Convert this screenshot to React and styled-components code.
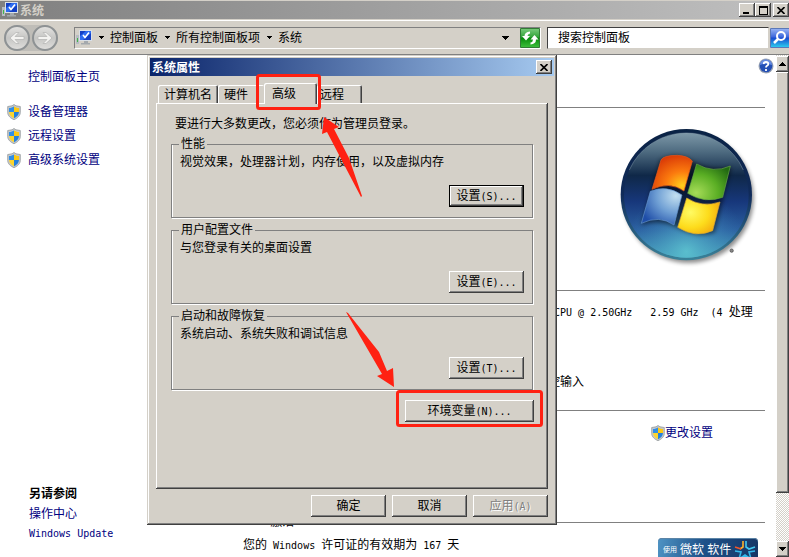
import React from 'react';
import styled, { createGlobalStyle, css } from 'styled-components';

const face = '#d4d0c8';
const navy = '#000080';
const red = '#ff2112';

const GlobalStyle = createGlobalStyle`
  * {
    box-sizing: border-box;
  }

  body {
    margin: 0;
    overflow: hidden;
    background: #fff;
    color: #000;
    font: 12px/16px 'Liberation Sans', 'Noto Sans CJK SC', sans-serif;
  }

  button,
  input {
    padding: 0;
    border: 0;
    color: inherit;
    font: inherit;
  }

  p,
  h1,
  h2,
  ul {
    margin: 0;
    padding: 0;
    font: inherit;
    list-style: none;
  }

  svg {
    display: block;
    flex: none;
  }
`;

const raised = css`
  background: ${face};
  box-shadow: inset -1px -1px #404040, inset 1px 1px #fff,
    inset -2px -2px #808080;
`;

const Page = styled.div`
  position: relative;
  display: flex;
  flex-direction: column;
  height: 100vh;
  overflow: hidden;
`;

// half-width characters take exactly half of a 12px ideograph
const Half = styled.span`
  font-family: 'DejaVu Sans Mono', monospace;
  font-size: 10px;
  white-space: pre;
`;

const TitleBar = styled.header`
  display: flex;
  flex: none;
  align-items: center;
  height: 20px;
  padding-left: 2px;
  border-top: 1px solid ${face};
  border-bottom: 1px solid ${face};
  background: linear-gradient(90deg, #808080, #c0c0c0);
`;

const Title = styled.h1`
  flex: 1;
  padding: 1px 0 0 2px;
  color: ${(p) => p.$color};
  font-weight: bold;
`;

const WindowButton = styled.button`
  ${raised}
  display: grid;
  place-items: center;
  width: 16px;
  height: 14px;
  margin-left: ${(p) => (p.$apart ? 2 : 0)}px;
`;

const NavBar = styled.nav`
  display: flex;
  flex: none;
  align-items: center;
  height: 35px;
  padding-left: 4px;
  border-top: 1px solid #fff;
  border-bottom: 1px solid #808080;
  background: ${face};
`;

const History = styled.div`
  display: flex;
  gap: 2px;
  margin-right: 16px;
  border-radius: 13px;
  background: #bfbdb8;
`;

const HistoryButton = styled.button`
  display: grid;
  place-items: center;
  width: 26px;
  height: 26px;
  border: 2px solid #8e9294;
  border-radius: 50%;
  background: linear-gradient(#e2e1df, #c6c6c4 50%, #dedddb);
`;

const AddressBar = styled.div`
  display: flex;
  flex: 1;
  align-items: center;
  height: 22px;
  padding-left: 1px;
  border: 1px solid #808080;
  border-right-color: #fff;
  border-bottom-color: #fff;
`;

const Crumb = styled.button`
  background: none;
  white-space: nowrap;
`;

const ArrowButton = styled.button`
  display: grid;
  place-items: center;
  width: 18px;
  height: 18px;
  margin-left: ${(p) => (p.$last ? 'auto' : 0)};
  background: none;
`;

const RefreshButton = styled.button`
  width: 20px;
  height: 20px;
  margin-left: 6px;
`;

const SearchBox = styled.input`
  width: 222px;
  height: 22px;
  margin: 0 1px 0 6px;
  padding-left: 10px;
  border: 1px solid #404040;
  border-right-color: ${face};
  border-bottom-color: ${face};
  border-radius: 0;
  background: #fff;

  &::placeholder {
    color: #000;
    opacity: 1;
  }
`;

const SearchButton = styled.button`
  width: 19px;
  height: 20px;
`;

const Body = styled.div`
  display: flex;
  flex: 1;
  min-height: 0;
`;

const Sidebar = styled.aside`
  display: flex;
  flex-direction: column;
  flex: none;
  width: 200px;
  padding: 10px 0 13px 7px;
`;

const Link = styled.a`
  display: flex;
  align-items: center;
  gap: ${(p) => p.$gap || 0}px;
  color: ${navy};
  text-decoration: none;
`;

const TaskList = styled.ul`
  margin-top: 11px;

  ${Link} {
    height: 24px;
  }
`;

const HomeLink = styled(Link)`
  height: 24px;
  padding-left: 21px;
`;

const SeeAlso = styled.section`
  margin-top: auto;
  padding-left: 22px;
  line-height: 20px;
`;

const SeeAlsoTitle = styled.h2`
  font-weight: bold;
`;

const Main = styled.main`
  display: flex;
  flex: 1;
  flex-direction: column;
  min-width: 0;
  padding-left: 22px;
  overflow: hidden;
`;

const HelpRow = styled.div`
  display: flex;
  flex: none;
  justify-content: flex-end;
  height: 44px;
  padding: 3px 2px 0 0;
`;

const HelpButton = styled.button`
  width: 16px;
  height: 16px;
  background: none;
`;

const Section = styled.section`
  flex: none;
  height: ${(p) => p.$height}px;
  margin-right: 11px;
`;

const SectionTitle = styled.h2`
  display: flex;
  align-items: center;
  height: 16px;

  &::after {
    content: '';
    flex: 1;
    height: 1px;
    background: #808080;
  }
`;

const LogoRow = styled.div`
  display: flex;
  justify-content: flex-end;
  padding: 12px 5px 0 0;
`;

const Specs = styled.div`
  display: grid;
  gap: 53px;
  width: 217px;
  margin: 6px 0 0 auto;
  white-space: pre;
`;

const ChangeRow = styled.div`
  display: flex;
  justify-content: flex-end;
  padding: 7px 52px 0 0;
`;

const License = styled.div`
  display: flex;
  align-items: flex-start;
  justify-content: space-between;
  padding: 7px 7px 0 21px;
`;

const Genuine = styled.a`
  display: flex;
  align-items: center;
  gap: 3px;
  width: 100px;
  height: 28px;
  padding: 0 4px 4px 5px;
  margin-top: 1px;
  border-radius: 4px;
  background: linear-gradient(100deg, #4f94c4, #1e5189 45%, #173564);
  box-shadow: inset 0 1px #5b84a6;
  color: #fff;
  white-space: nowrap;
  text-decoration: none;

  small {
    font-size: 7px;
  }
`;

const ScrollBar = styled.div`
  display: flex;
  flex: none;
  flex-direction: column;
  width: 13px;
  padding-top: 1px;
  background: repeating-conic-gradient(#fff 0 25%, ${face} 0 50%) 0 0 / 2px 2px;
`;

const ScrollButton = styled.button`
  ${raised}
  display: grid;
  flex: none;
  place-items: center;
  height: 16px;
`;

const ScrollThumb = styled.div`
  ${raised}
  flex: 1;
  margin-bottom: 48px;
`;

const Dialog = styled.section`
  position: absolute;
  top: 55px;
  left: 147px;
  width: 410px;
  padding: 3px;
  background: ${face};
  box-shadow: inset -1px -1px #404040, inset 1px 1px ${face},
    inset -2px -2px #808080, inset 2px 2px #fff;
`;

const DialogBar = styled.header`
  display: flex;
  align-items: center;
  height: 18px;
  padding-right: 2px;
  background: linear-gradient(90deg, #0a246a, #a6caf0);
`;

const DialogBody = styled.div`
  padding: 7px 6px 5px;
`;

const Tabs = styled.div`
  display: flex;
  align-items: flex-end;
  height: 20px;
  padding-left: 2px;
`;

const Tab = styled.button`
  position: relative;
  width: ${(p) => p.$width}px;
  height: 18px;
  padding: 2px 0 0 ${(p) => p.$indent}px;
  border-radius: 2px 2px 0 0;
  background: ${face};
  box-shadow: inset 1px 1px #fff, inset -1px 0 #404040, inset -2px 0 #808080;
  text-align: left;

  ${(p) =>
    p.$flat &&
    css`
      box-shadow: inset 1px 1px #fff;
    `}

  &[aria-selected='true'] {
    z-index: 1;
    height: 21px;
    margin-bottom: -1px;
    padding-bottom: 2px;
  }
`;

const Panel = styled.div`
  ${raised}
  height: 386px;
  padding: 13px 14px 0 15px;
`;

const Intro = styled.p`
  padding-left: 4px;
`;

const Group = styled.fieldset`
  display: flex;
  flex-direction: column;
  height: 82px;
  min-width: 0;
  margin: 0 0 ${(p) => (p.$last ? 10 : 4)}px;
  padding: 2px 8px 10px;
  border: 1px solid #808080;
  box-shadow: 1px 1px #fff, inset 1px 0 #fff;

  legend {
    margin-left: -1px;
    padding: 0 2px;
  }
`;

const Groups = styled.div`
  padding: 4px 1px 0 0;
`;

const Button = styled.button`
  ${raised}
  flex: none;
  width: ${(p) => p.$width || 75}px;
  height: 22px;
  white-space: nowrap;

  &:disabled {
    color: #808080;
    text-shadow: 1px 1px #fff;
  }

  ${(p) =>
    p.$primary &&
    css`
      border: 1px solid #000;
    `}
`;

const ButtonRow = styled.div`
  display: flex;
  justify-content: flex-end;
  gap: 6px;
  margin-top: ${(p) => p.$top || 'auto'};
`;

const Marks = styled.svg`
  position: absolute;
  z-index: 2;
  top: 0;
  left: 0;
  pointer-events: none;
`;

const Caret = ({ up }) => (
  <svg width='7' height='4' viewBox='0 0 7 4' shapeRendering='crispEdges'>
    <path d={up ? 'M0 4 3.5 0 7 4z' : 'M0 0h7L3.5 4z'} />
  </svg>
);

const CrumbCaret = () => (
  <svg width='5' height='3' viewBox='0 0 5 3' shapeRendering='crispEdges'>
    <path d='M0 0h5v1H0zM1 1h3v1H1zM2 2h1v1H2z' />
  </svg>
);

const Cross = () => (
  <svg width='8' height='7' viewBox='0 0 8 7'>
    <path d='M.5 0 7.5 7M7.5 0 .5 7' stroke='#000' strokeWidth='1.6' />
  </svg>
);

const ComputerIcon = () => (
  <svg width='16' height='16' viewBox='0 0 16 16' aria-hidden='true'>
    <path d='M0 5h3v9H0z' fill='#b6bcc2' />
    <path d='M1 8h1v4H1z' fill='#42b648' />
    <path d='M3 0h13v11H3z' fill='#d9e0e8' />
    <path d='M4 1h11v9H4z' fill='#123fc4' />
    <path d='M4 6 10 1h5v2L7 10H4z' fill='#2d6cf0' />
    <path d='m7 5 2 2.500L13 2.500' fill='none' stroke='#fff' strokeWidth='1.6' />
    <path d='M8 11h4v2h2v1.5H5V13h3z' fill='#a4a9ad' />
  </svg>
);

const Shield = () => (
  <svg width='14' height='16' viewBox='0 0 14 16' aria-hidden='true'>
    <path
      d='M7 .5 9 1.8l4.3.7v6c0 3.3-3 5.8-6.3 7.2C3.7 14.3.7 11.8.7 8.5v-6L5 1.8z'
      fill='#c4c8cb'
      stroke='#969a9d'
      strokeWidth='.8'
    />
    <path d='M7 2.500v5.500H2V4C4 4 5.800 3.400 7 2.500z' fill='#2f8ee6' />
    <path d='M7 2.500V8h5V4C10 4 8.200 3.400 7 2.500z' fill='#fdc912' />
    <path d='M7 8v6.300C4.700 13.300 2.200 11.200 2 8z' fill='#fdd52d' />
    <path d='M7 8v6.300c2.300-1 4.800-3.100 5-6.300z' fill='#2480dc' />
  </svg>
);

const NavArrow = ({ back }) => (
  <svg width='16' height='14' viewBox='0 0 16 14'>
    <path
      d={
        back
          ? 'M1 7 7 1.500h3L6 5.500h9v3H6l4 4H7z'
          : 'M15 7 9 1.500H6l4 4H1v3h9l-4 4h3z'
      }
      fill='#f4f3f1'
      stroke='#b8b8b6'
      strokeWidth='.8'
    />
  </svg>
);

const RefreshIcon = () => (
  <svg width='20' height='20' viewBox='0 0 20 20'>
    <defs>
      <linearGradient id='green' x2='0' y2='1'>
        <stop stopColor='#7acb7c' />
        <stop offset='.45' stopColor='#33a43a' />
        <stop offset='.5' stopColor='#078b0b' />
        <stop offset='1' stopColor='#3ec03e' />
      </linearGradient>
    </defs>
    <path d='M.5.5h19v19H.5z' fill='url(#green)' stroke='#317c35' />
    <path
      d='M10 3.500v2Q7.500 6 7.500 8H10l-4 4.500L2 8h2.500Q4.500 4 10 3.500zM10.500 16.500v-2q2.500-.5 2.500-3h-2.500l4-4.500 4 4.500H16q0 4.500-5.500 5z'
      fill='#fff'
    />
  </svg>
);

const SearchIcon = () => (
  <svg width='19' height='20' viewBox='0 0 19 20'>
    <defs>
      <linearGradient id='blue' x2='0' y2='1'>
        <stop stopColor='#9ab5f4' />
        <stop offset='.45' stopColor='#3d67dc' />
        <stop offset='.5' stopColor='#174ad0' />
        <stop offset='1' stopColor='#2ed0f0' />
      </linearGradient>
    </defs>
    <path d='M.5.5h19v19H.5z' fill='url(#blue)' stroke='#5b78b8' />
    <circle cx='11' cy='8' r='4' fill='none' stroke='#fff' strokeWidth='2' />
    <path d='m8 11-4 4' stroke='#fff' strokeWidth='2.500' />
  </svg>
);

const HelpIcon = () => (
  <svg width='16' height='16' viewBox='0 0 16 16'>
    <circle cx='8' cy='8' r='7.500' fill='#9ba4b4' />
    <circle cx='8' cy='8' r='6.300' fill='#234fb4' />
    <path d='M2 7a6 5.500 0 0 1 12 0q-6-2-12 0z' fill='#668be0' />
    <path
      d='M5.700 6q.1-2 2.300-2t2.300 2Q10.300 7 9 7.700 8 8.300 8 9.500M8 11v2'
      fill='none'
      stroke='#fff'
      strokeWidth='1.800'
    />
  </svg>
);

const WindowsLogo = () => (
  <svg width='143' height='143' viewBox='51 51 429 429' role='img' aria-label='Windows'>
    <defs>
      <linearGradient id='orb' x2='0' y2='1'>
        <stop stopColor='#7d98a8' />
        <stop offset='.15' stopColor='#4e6b80' />
        <stop offset='.34' stopColor='#0f2848' />
        <stop offset='.55' stopColor='#17377b' />
        <stop offset='.78' stopColor='#2b60a0' />
        <stop offset='1' stopColor='#48a5ba' />
      </linearGradient>
      <radialGradient id='floor' cx='.5' cy='.95' r='.5'>
        <stop stopColor='#60c8d4' stopOpacity='.8' />
        <stop offset='1' stopColor='#3a80bc' stopOpacity='0' />
      </radialGradient>
      <linearGradient id='rim' x2='0' y2='1'>
        <stop stopColor='#0a2244' />
        <stop offset='.5' stopColor='#102b5a' />
        <stop offset='1' stopColor='#3a8299' />
      </linearGradient>
      <radialGradient id='fr' cx='.75' cy='.85' r='.9'>
        <stop stopColor='#ffd01c' />
        <stop offset='.45' stopColor='#fb7a0e' />
        <stop offset='1' stopColor='#d93807' />
      </radialGradient>
      <radialGradient id='fg' cx='.2' cy='.8' r='.95'>
        <stop stopColor='#a6dc58' />
        <stop offset='.55' stopColor='#5aae24' />
        <stop offset='1' stopColor='#226a12' />
      </radialGradient>
      <radialGradient id='fb' cx='.85' cy='.2' r='.95'>
        <stop stopColor='#c2dff0' />
        <stop offset='.5' stopColor='#6f9fd4' />
        <stop offset='1' stopColor='#1f4ea8' />
      </radialGradient>
      <radialGradient id='fy' cx='.3' cy='.4' r='.85'>
        <stop stopColor='#fffb63' />
        <stop offset='.5' stopColor='#fddc1c' />
        <stop offset='1' stopColor='#f09a08' />
      </radialGradient>
      <filter id='shade' x='-20%' y='-20%' width='140%' height='140%'>
        <feGaussianBlur stdDeviation='7' />
      </filter>
    </defs>
    <circle cx='266' cy='264' r='195' opacity='.45' filter='url(#shade)' />
    <circle cx='259' cy='254' r='197' fill='url(#rim)' />
    <circle cx='259' cy='256' r='187' fill='url(#orb)' />
    <circle cx='259' cy='256' r='187' fill='url(#floor)' />
    <path d='M88 180A187 187 0 0 1 430 180' fill='none' stroke='#a9bcc6' strokeOpacity='.35' strokeWidth='3' />
    <g opacity='.5' filter='url(#shade)'>
      <path d='M180 150Q230 120 280 155Q340 185 394 170L344 368Q290 385 236 355Q180 325 124 345z' />
    </g>
    <path d='M183 150Q190 136 232 136Q262 137 277 153L252 243Q208 213 156 238z' fill='url(#fr)' stroke='#e9581d' strokeWidth='2' />
    <path d='M290 162Q340 191 391 168L368 262Q315 282 263 250z' fill='url(#fg)' stroke='#68a845' strokeWidth='2' />
    <path d='M151 244Q199 223 246 255L222 345Q178 314 124 340z' fill='url(#fb)' stroke='#6494cc' strokeWidth='2' />
    <path d='M260 264Q307 294 360 276L338 362Q287 386 233 352z' fill='url(#fy)' stroke='#d9a834' strokeWidth='2' />
    <circle cx='395' cy='422' r='5' fill='#888' stroke='#444' strokeWidth='2' />
  </svg>
);

const StarIcon = () => (
  <svg width='22' height='20' viewBox='0 0 22 20' fill='none' strokeWidth='1.600'>
    <path d='M9 1v6L6 9' stroke='#ffb02a' />
    <path d='M7 9 1 7' stroke='#f4572a' />
    <path d='M12 1v6l3 2 6-2' stroke='#42c8f0' />
    <path d='m1 11 6 1-2 7M21 11l-6 1 2 7-6-4-6 4' stroke='#35b8ea' />
  </svg>
);

const tasks = ['设备管理器', '远程设置', '高级系统设置'];

const crumbs = ['控制面板', '所有控制面板项', '系统'];

const groups = [
  {
    name: '性能',
    text: '视觉效果，处理器计划，内存使用，以及虚拟内存',
    accessKey: 'S',
  },
  { name: '用户配置文件', text: '与您登录有关的桌面设置', accessKey: 'E' },
  {
    name: '启动和故障恢复',
    text: '系统启动、系统失败和调试信息',
    accessKey: 'T',
  },
];

const SystemProperties = () => (
  <Dialog role='dialog' aria-labelledby='dialog-title'>
    <DialogBar>
      <Title as='h2' id='dialog-title' $color='#fff'>
        系统属性
      </Title>
      <WindowButton aria-label='关闭'>
        <Cross />
      </WindowButton>
    </DialogBar>
    <DialogBody>
      <Tabs role='tablist'>
        <Tab role='tab' $width={60} $indent={6}>
          计算机名
        </Tab>
        <Tab role='tab' $width={46} $indent={6} $flat>
          硬件
        </Tab>
        <Tab role='tab' $width={53} $indent={8} aria-selected='true'>
          高级
        </Tab>
        <Tab role='tab' $width={45} $indent={3}>
          远程
        </Tab>
      </Tabs>
      <Panel role='tabpanel'>
        <Intro>要进行大多数更改，您必须作为管理员登录。</Intro>
        <Groups>
          {groups.map((group, i) => (
            <Group key={group.name} $last={i === groups.length - 1}>
              <legend>{group.name}</legend>
              <p>{group.text}</p>
              <ButtonRow>
                <Button $primary={i === 0}>
                  设置<Half>({group.accessKey})...</Half>
                </Button>
              </ButtonRow>
            </Group>
          ))}
        </Groups>
        <ButtonRow $top='0'>
          <Button $width={129}>
            环境变量<Half>(N)...</Half>
          </Button>
        </ButtonRow>
      </Panel>
      <ButtonRow $top='6px'>
        <Button>确定</Button>
        <Button>取消</Button>
        <Button disabled>
          应用<Half>(A)</Half>
        </Button>
      </ButtonRow>
    </DialogBody>
    <Marks width='410' height='470' viewBox='147 55 410 470' aria-hidden='true'>
      <g fill='none' stroke={red} strokeWidth='3'>
        <rect x='257.500' y='75.500' width='62' height='33' rx='2' />
        <rect x='397.500' y='391.500' width='144' height='34' rx='2' />
      </g>
      <g fill={red}>
        <path d='M324 117 339 127 334 129 349 158 362 196 361 197 327 132 322 134z' />
        <path d='M346 312 348 313 379 352 387 371 393 368 394 387 377 376 382 374z' />
      </g>
    </Marks>
  </Dialog>
);

const App = () => (
  <Page>
    <GlobalStyle />
    <TitleBar>
      <ComputerIcon />
      <Title $color={face}>系统</Title>
      <WindowButton aria-label='最小化'>
        <svg width='8' height='8' viewBox='0 0 8 8'>
          <path d='M0 6h6v2H0z' />
        </svg>
      </WindowButton>
      <WindowButton aria-label='最大化'>
        <svg width='9' height='9' viewBox='0 0 9 9'>
          <path d='M0 0h9v9H0zM1 2v6h7V2z' fillRule='evenodd' />
        </svg>
      </WindowButton>
      <WindowButton aria-label='关闭' $apart>
        <Cross />
      </WindowButton>
    </TitleBar>
    <NavBar>
      <History>
        <HistoryButton aria-label='后退'>
          <NavArrow back />
        </HistoryButton>
        <HistoryButton aria-label='前进'>
          <NavArrow />
        </HistoryButton>
      </History>
      <AddressBar>
        <ComputerIcon />
        {crumbs.map((crumb) => (
          <React.Fragment key={crumb}>
            <ArrowButton aria-label='展开'>
              <CrumbCaret />
            </ArrowButton>
            <Crumb>{crumb}</Crumb>
          </React.Fragment>
        ))}
        <ArrowButton aria-label='以前的位置' $last>
          <Caret />
        </ArrowButton>
        <RefreshButton aria-label='刷新'>
          <RefreshIcon />
        </RefreshButton>
      </AddressBar>
      <SearchBox aria-label='搜索控制面板' placeholder='搜索控制面板' />
      <SearchButton aria-label='搜索'>
        <SearchIcon />
      </SearchButton>
    </NavBar>
    <Body>
      <Sidebar>
        <HomeLink href='#home'>控制面板主页</HomeLink>
        <TaskList>
          {tasks.map((task) => (
            <li key={task}>
              <Link href='#task' $gap={7}>
                <Shield />
                {task}
              </Link>
            </li>
          ))}
        </TaskList>
        <SeeAlso>
          <SeeAlsoTitle>另请参阅</SeeAlsoTitle>
          <Link href='#action-center'>操作中心</Link>
          <Link href='#update'>
            <Half>Windows Update</Half>
          </Link>
        </SeeAlso>
      </Sidebar>
      <Main>
        <HelpRow>
          <HelpButton aria-label='帮助'>
            <HelpIcon />
          </HelpButton>
        </HelpRow>
        <Section $height={183}>
          <SectionTitle />
          <LogoRow>
            <WindowsLogo />
          </LogoRow>
        </Section>
        <Section $height={120}>
          <SectionTitle />
          <Specs>
            <p>
              <Half>{' CPU @ 2.50GHz   2.59 GHz  (4 '}</Half>处理
            </p>
            <p>控输入</p>
          </Specs>
        </Section>
        <Section $height={112}>
          <SectionTitle />
          <ChangeRow>
            <Link href='#change'>
              <Shield />
              更改设置
            </Link>
          </ChangeRow>
        </Section>
        <Section>
          <SectionTitle>
            <Half>Windows </Half>激活
          </SectionTitle>
          <License>
            <p>
              您的<Half> Windows </Half>许可证的有效期为<Half> 167 </Half>天
            </p>
            <Genuine href='#genuine'>
              <small>使用</small>
              微软 软件
              <StarIcon />
            </Genuine>
          </License>
        </Section>
      </Main>
      <ScrollBar>
        <ScrollButton aria-label='向上滚动'>
          <Caret up />
        </ScrollButton>
        <ScrollThumb />
        <ScrollButton aria-label='向下滚动'>
          <Caret />
        </ScrollButton>
      </ScrollBar>
    </Body>
    <SystemProperties />
  </Page>
);

export default App;
